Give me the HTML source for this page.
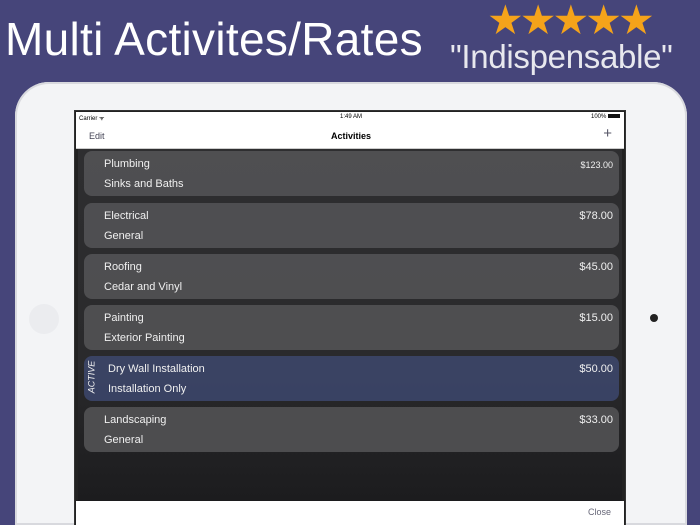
<!DOCTYPE html><html style="overflow:hidden"><head><style>
html,body{margin:0;width:700px;height:525px;overflow:hidden}
body{background:#46457a;font-family:"Liberation Sans",sans-serif;position:relative}
.t{position:absolute;color:#fff;white-space:nowrap}
.ipad{position:absolute;left:15px;top:82px;width:672px;height:443px;background:#f3f4f6;border-radius:34px 34px 0 0;box-shadow:inset 0 0 0 2px #d8d9de}
.scr{position:absolute;left:74px;top:110px;width:552px;height:415px;background:#222;border:1px solid #333;border-bottom:none;box-sizing:border-box;overflow:hidden}
.sb{position:absolute;left:1px;right:1px;top:1px;height:36px;background:#fff;border-bottom:1px solid #ccc}
.list{position:absolute;left:3px;right:3px;top:38px;height:352px;background:linear-gradient(#2e2e30,#2a2a2c 60%,#1c1c1e 100%)}
.card{position:absolute;left:6px;width:535px;height:45px;border-radius:8px;background:rgba(85,85,87,.85);color:#f0f0f0;font-size:11px}
.card .a{position:absolute;left:20px;top:7px}
.card .b{position:absolute;left:20px;top:27px}
.card .p{position:absolute;right:6px;top:7px}
.bot{position:absolute;left:1px;right:1px;top:390px;height:25px;background:#fff}
</style></head><body>
<div class="t" style="left:5px;top:12px;font-size:46px;letter-spacing:0.3px">Multi Activites/Rates</div>
<div class="t" style="left:487px;top:-4px;font-size:41px;color:#f5a31a;letter-spacing:-4px">★★★★★</div>
<div class="t" style="left:450px;top:38px;font-size:33px;color:#e8e8ee;letter-spacing:-0.3px">"Indispensable"</div>
<div class="ipad"></div>
<div style="position:absolute;left:29px;top:304px;width:30px;height:30px;border-radius:50%;background:#ebecef"></div>
<div style="position:absolute;left:650px;top:314px;width:8px;height:8px;border-radius:50%;background:#222"></div>
<div class="scr">
<div class="sb">
<span style="position:absolute;left:3px;top:2px;font-size:6px">Carrier ᯤ</span>
<span style="position:absolute;left:264px;top:2px;font-size:6px">1:49 AM</span>
<span style="position:absolute;right:4px;top:2px;font-size:6px">100% <span style="display:inline-block;width:12px;height:4px;background:#111"></span></span>
<span style="position:absolute;left:13px;top:19px;font-size:9px;color:#445">Edit</span>
<span style="position:absolute;left:255px;top:19px;font-size:9px;font-weight:bold">Activities</span>
<span style="position:absolute;right:12px;top:13px;font-size:15px;color:#556">+</span>
</div>
<div class="list">
<div class="card" style="top:2px"><span class="a">Plumbing</span><span class="b">Sinks and Baths</span><span class="p" style="font-size:9px;top:9px">$123.00</span></div>
<div class="card" style="top:54px"><span class="a">Electrical</span><span class="b">General</span><span class="p">$78.00</span></div>
<div class="card" style="top:105px"><span class="a">Roofing</span><span class="b">Cedar and Vinyl</span><span class="p">$45.00</span></div>
<div class="card" style="top:156px"><span class="a">Painting</span><span class="b">Exterior Painting</span><span class="p">$15.00</span></div>
<div class="card" style="top:207px;background:rgba(60,70,105,.9)"><span style="position:absolute;left:-9px;top:16px;font-size:9px;font-style:italic;transform:rotate(-90deg)">ACTIVE</span><span class="a" style="left:24px">Dry Wall Installation</span><span class="b" style="left:24px">Installation Only</span><span class="p">$50.00</span></div>
<div class="card" style="top:258px"><span class="a">Landscaping</span><span class="b">General</span><span class="p">$33.00</span></div>
</div>
<div class="bot"><span style="position:absolute;right:13px;top:6px;font-size:9px;color:#667">Close</span></div>
</div>
</body></html>
